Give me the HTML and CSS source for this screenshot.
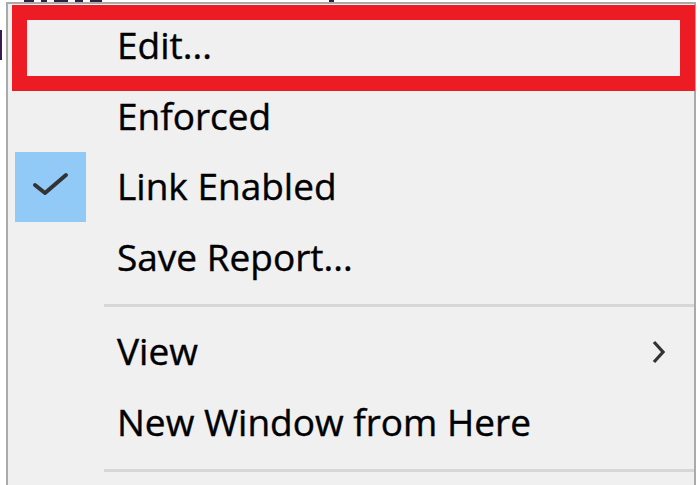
FILE: index.html
```html
<!DOCTYPE html>
<html lang="en">
<head>
  <meta charset="UTF-8" />
  <title>Link context menu</title>
  <link rel="stylesheet" href="styles.css">
</head>
<body>
  <div class="window">
    <!-- resztki okna pod menu -->
    <div class="behind-line">
      <span class="frag w10"></span>
      <span class="frag w6"></span>
      <span class="frag w14"></span>
      <span class="frag w8"></span>
      <span class="frag w12"></span>
      <span class="frag w5 far"></span>
    </div>
    <span class="behind-edge"></span>

    <div class="menu">
      <div class="item">
        <span class="gutter"></span>
        <span class="label">Edit...</span>
      </div>
      <div class="item">
        <span class="gutter"></span>
        <span class="label">Enforced</span>
      </div>
      <div class="item">
        <span class="gutter"><span class="check">
          <svg width="71" height="70" viewBox="0 0 71 70">
            <polyline points="20,33 30,41 51,23" fill="none" stroke="#333" stroke-width="4" stroke-linecap="round" stroke-linejoin="round"/>
          </svg>
        </span></span>
        <span class="label">Link Enabled</span>
      </div>
      <div class="item">
        <span class="gutter"></span>
        <span class="label">Save Report...</span>
      </div>
      <div class="sep"></div>
      <div class="item">
        <span class="gutter"></span>
        <span class="label">View</span>
        <svg class="arrow" width="14" height="26" viewBox="0 0 14 26">
          <polyline points="3,3 12,13 3,23" fill="none" stroke="#333" stroke-width="3.2"/>
        </svg>
      </div>
      <div class="item">
        <span class="gutter"></span>
        <span class="label">New Window from Here</span>
      </div>
      <div class="sep"></div>
    </div>

    <!-- rahmen z zrzutu -->
    <div class="highlight"></div>
  </div>
</body>
</html>
```

FILE: styles.css
```css
body {
  margin: 0;
  background-color: #fff;
  font-family: 'Open Sans', 'Noto Sans', sans-serif;
}

.window {
  position: relative;
  width: 700px;
  height: 485px;
  overflow: hidden;
}

.behind-line {
  height: 3px;
  padding-left: 24px;
  display: flex;
  gap: 7px;
}

.frag {
  height: 3px;
  background-color: #2a2440;
}

.w5 { width: 5px; }
.w6 { width: 6px; }
.w8 { width: 8px; }
.w10 { width: 10px; }
.w12 { width: 12px; }
.w14 { width: 14px; }

.frag.far {
  margin-left: 220px;
}

.behind-edge {
  position: absolute;
  left: 0;
  top: 30px;
  width: 2px;
  height: 30px;
  background-color: #3a1a50;
}

.menu {
  position: absolute;
  left: 6px;
  top: 2px;
  width: 686px;
  height: 490px;
  background-color: #f0f0f0;
  border: 2px solid #aaa;
  padding-top: 7px;
}

.item {
  display: flex;
  align-items: center;
  height: 70.5px;
}

.gutter {
  width: 96px;
  height: 100%;
  flex-shrink: 0;
  display: flex;
  align-items: center;
}

.check {
  margin-left: 7px;
  width: 71px;
  height: 70px;
  background-color: #91c9f7;
}

.check svg {
  display: block;
}

.label {
  padding-left: 13px;
  font-size: 37px;
  color: #000;
  flex: 1;
  line-height: 1;
  padding-bottom: 3px;
  -webkit-text-stroke: 0.4px #000;
}

.arrow {
  margin-right: 29px;
}

.sep {
  height: 24px;
  margin-left: 96px;
  display: flex;
  align-items: center;
}

.sep::after {
  content: "";
  display: block;
  width: 100%;
  height: 3px;
  background-color: #d7d7d7;
}

.highlight {
  position: absolute;
  left: 12px;
  top: 5px;
  width: 683px;
  height: 86px;
  box-sizing: border-box;
  border: 15px solid #ed1c24;
}
```
